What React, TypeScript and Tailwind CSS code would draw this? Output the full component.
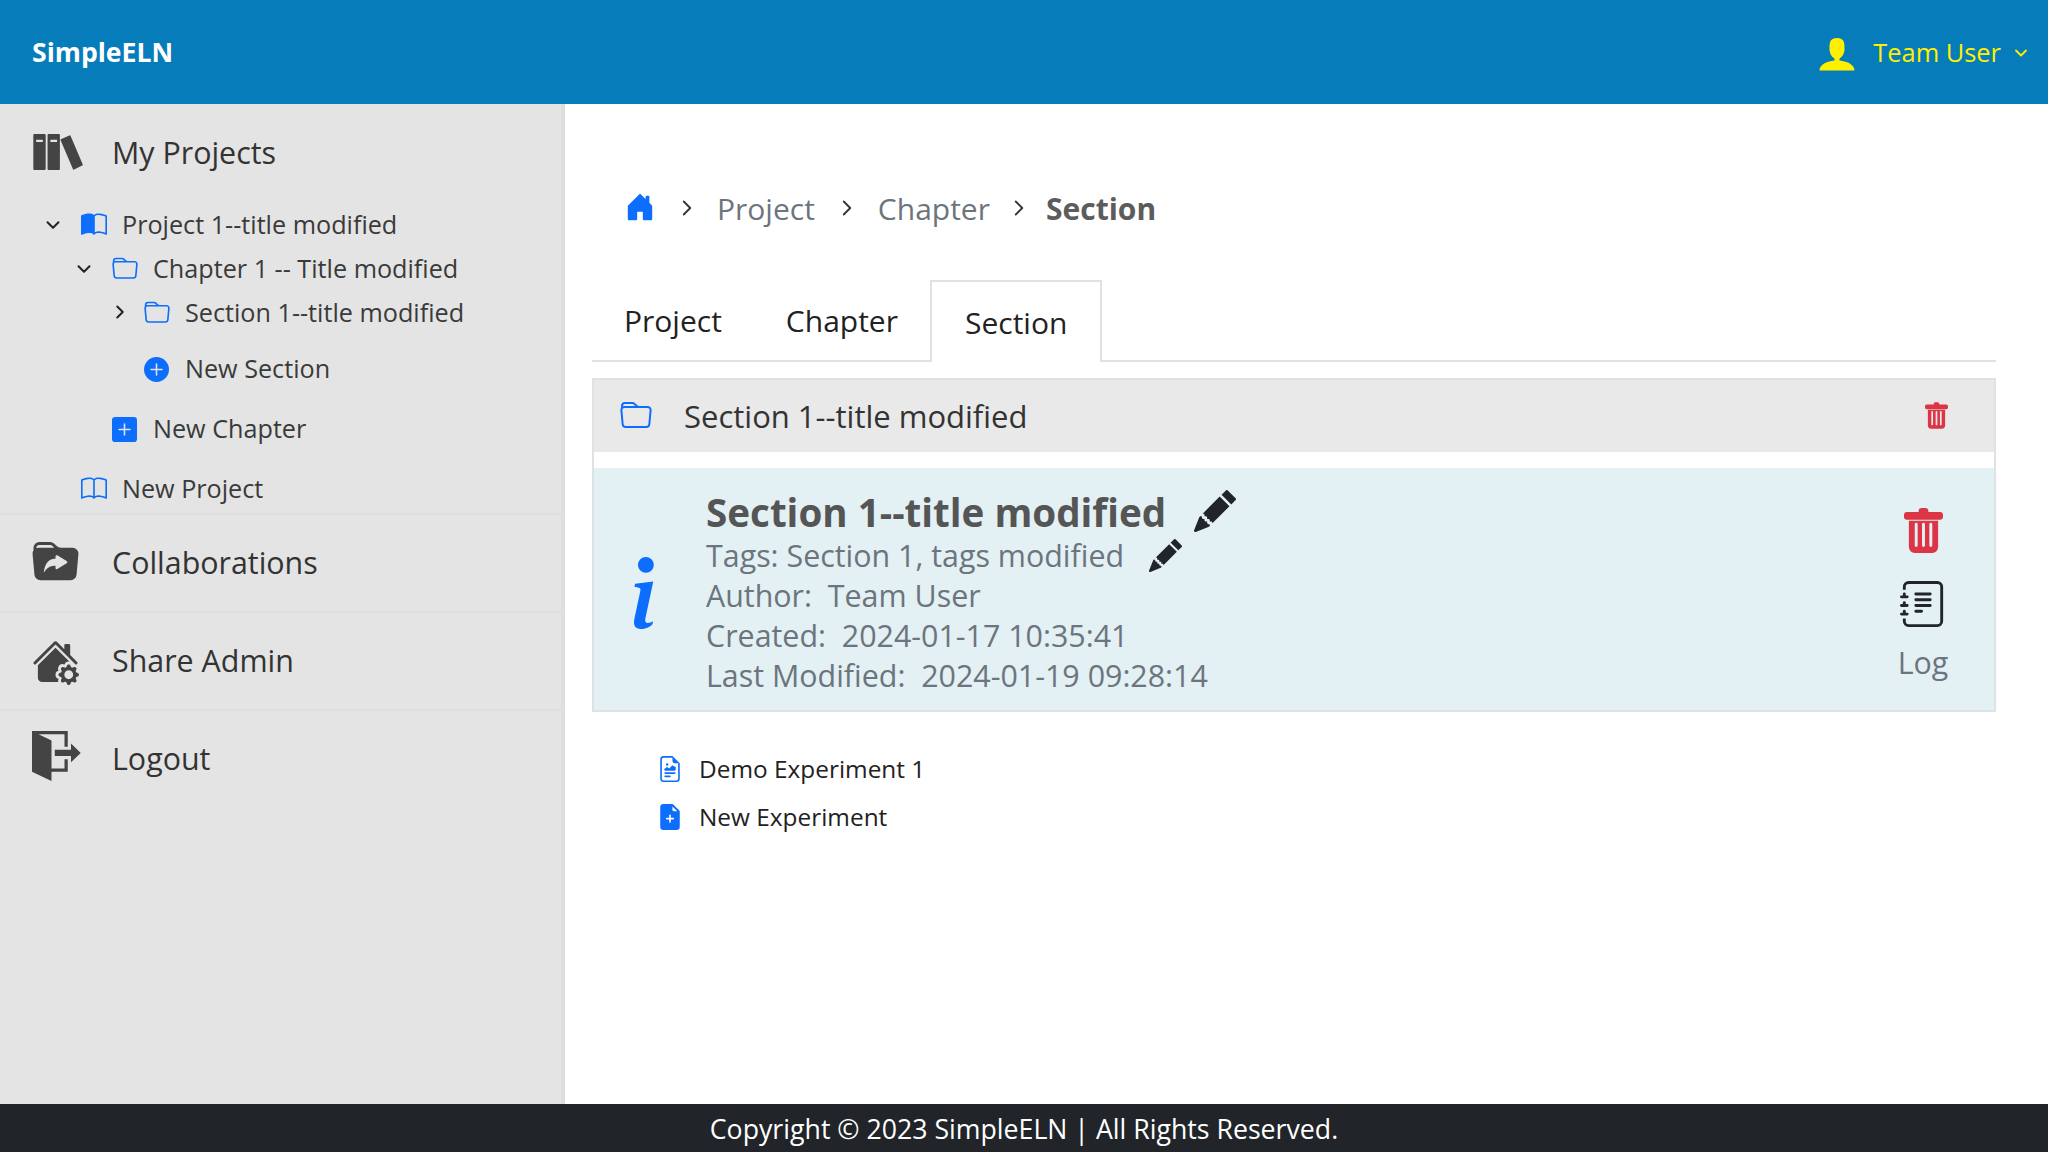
import type { ReactNode } from 'react';
import { ChevronDown, ChevronRight } from 'lucide-react';
import {
  BsBook,
  BsBookHalf,
  BsFileEarmarkPlusFill,
  BsFileEarmarkRichtext,
  BsFolder,
  BsFolderSymlinkFill,
  BsHouseDoorFill,
  BsHouseGearFill,
  BsInfoLg,
  BsJournalText,
  BsPencilFill,
  BsPlusCircleFill,
  BsPlusSquareFill,
} from 'react-icons/bs';
import { ImExit, ImUser } from 'react-icons/im';

function TrashIcon({ className }: { className: string }) {
  return (
    <svg viewBox="0 0 40 46" className={className} fill="currentColor">
      <path d="M15 3a3 3 0 0 1 3-3h4a3 3 0 0 1 3 3v1h12a3 3 0 0 1 3 3v2a3 3 0 0 1-3 3H3a3 3 0 0 1-3-3V7a3 3 0 0 1 3-3h12z" />
      <path
        fillRule="evenodd"
        d="M5 13h30v27a6 6 0 0 1-6 6H11a6 6 0 0 1-6-6zm6 3.500v22a1.500 1.500 0 0 0 3 0v-22a1.500 1.500 0 0 0-3 0zm7.500 0v22a1.500 1.500 0 0 0 3 0v-22a1.500 1.500 0 0 0-3 0zm7.500 0v22a1.500 1.500 0 0 0 3 0v-22a1.500 1.500 0 0 0-3 0z"
      />
    </svg>
  );
}

function LibraryIcon({ className }: { className: string }) {
  return (
    <svg viewBox="0 0 52 39" className={className} fill="currentColor">
      <path
        fillRule="evenodd"
        d="M1 0h11a1 1 0 0 1 1 1v36a1 1 0 0 1-1 1H1a1 1 0 0 1-1-1V1a1 1 0 0 1 1-1zm2 6v2.500h7V6zM16 0h11a1 1 0 0 1 1 1v36a1 1 0 0 1-1 1H16a1 1 0 0 1-1-1V1a1 1 0 0 1 1-1zm2 6v2.500h7V6z"
      />
      <path d="M29 5.500 38 1.500a1 1 0 0 1 1.300.5L52 32a1 1 0 0 1-.5 1.300L43 37.500a1 1 0 0 1-1.300-.5L29 7a1 1 0 0 1 0-1.500z" />
    </svg>
  );
}

function TreeRow({ pl, h, chevron, icon, label }: { pl: string; h: string; chevron?: ReactNode; icon: ReactNode; label: string }) {
  return (
    <div className={`flex items-center ${pl} ${h}`}>
      <span className="w-[39px] shrink-0 flex items-center">{chevron}</span>
      <span className="w-[41px] shrink-0 flex items-center">{icon}</span>
      <span className="text-[25.2px] leading-none text-[#3a3a3a] whitespace-nowrap">{label}</span>
    </div>
  );
}

function NavRow({ icon, label }: { icon: ReactNode; label: string }) {
  return (
    <div className="h-[98px] flex items-center pl-[32px] border-t-2 border-[#dedede]">
      <span className="w-[80px] shrink-0 flex items-center text-[#444444]">{icon}</span>
      <span className="text-[30.4px] leading-none text-[#333333]">{label}</span>
    </div>
  );
}

export default function App() {
  return (
    <div className="h-screen flex flex-col bg-white font-['Open_Sans','Noto_Sans',sans-serif]">
      {/* Header */}
      <header className="h-[104px] shrink-0 bg-[#067cba] flex items-center justify-between pl-[32px] pr-[17px] pt-[1px]">
        <span className="text-[26.6px] font-bold text-white">SimpleELN</span>
        <div className="flex items-center text-[#fff000]">
          <ImUser className="w-[40px] h-[40px]" />
          <span className="ml-[16px] text-[25.4px]">Team User</span>
          <ChevronDown className="ml-[10px] w-[20px] h-[20px]" strokeWidth={2.2} />
        </div>
      </header>

      <div className="flex-1 flex min-h-0">
        {/* Sidebar */}
        <aside className="w-[565px] shrink-0 bg-[#e4e4e4] border-r-[4px] border-[#dedede]">
          <div className="h-[98px] flex items-center pl-[32px]">
            <span className="w-[80px] shrink-0 flex items-center text-[#444444]">
              <LibraryIcon className="w-[52px] h-[37px] -mt-[2px]" />
            </span>
            <span className="text-[30.4px] leading-none text-[#333333]">My Projects</span>
          </div>
          <div className="h-[310px]">
            <TreeRow
              pl="pl-[42px]"
              h="h-[44px] mt-[1px]"
              chevron={<ChevronDown className="w-[22px] h-[22px] text-[#222222]" strokeWidth={2.2} />}
              icon={<BsBookHalf className="w-[26px] h-[26px] text-[#0d6efd]" />}
              label="Project 1--title modified"
            />
            <TreeRow
              pl="pl-[73px]"
              h="h-[44px]"
              chevron={<ChevronDown className="w-[22px] h-[22px] text-[#222222]" strokeWidth={2.2} />}
              icon={<BsFolder className="w-[26px] h-[26px] text-[#0d6efd]" />}
              label="Chapter 1 -- Title modified"
            />
            <TreeRow
              pl="pl-[105px]"
              h="h-[44px]"
              chevron={<ChevronRight className="w-[22px] h-[22px] text-[#222222] ml-[4px] -mt-[2px]" strokeWidth={2.2} />}
              icon={<BsFolder className="w-[26px] h-[26px] text-[#0d6efd]" />}
              label="Section 1--title modified"
            />
            <TreeRow
              pl="pl-[105px]"
              h="h-[44px] mt-[12px]"
              icon={<BsPlusCircleFill className="w-[25px] h-[25px] text-[#0d6efd]" />}
              label="New Section"
            />
            <TreeRow
              pl="pl-[73px]"
              h="h-[44px] mt-[16px]"
              icon={<BsPlusSquareFill className="w-[25px] h-[25px] text-[#0d6efd]" />}
              label="New Chapter"
            />
            <TreeRow
              pl="pl-[42px]"
              h="h-[44px] mt-[16px]"
              icon={<BsBook className="w-[26px] h-[26px] text-[#0d6efd]" />}
              label="New Project"
            />
          </div>
          <NavRow icon={<BsFolderSymlinkFill className="w-[47px] h-[47px] -mt-[2px]" />} label="Collaborations" />
          <NavRow icon={<BsHouseGearFill className="w-[47px] h-[47px]" />} label="Share Admin" />
          <NavRow icon={<ImExit className="w-[52px] h-[50px] -mt-[6px]" preserveAspectRatio="none" />} label="Logout" />
        </aside>

        {/* Main */}
        <main className="flex-1 pl-[27px] pr-[52px]">
          <nav className="h-[90px] mt-[59px] flex items-center pl-[33px] text-[30px] text-[#6c757d]">
            <BsHouseDoorFill className="w-[30px] h-[30px] text-[#0d6efd] -mt-[2px]" />
            <ChevronRight className="w-[26px] h-[26px] text-[#333333] ml-[19px] mr-[17px]" strokeWidth={1.7} />
            <span>Project</span>
            <ChevronRight className="w-[26px] h-[26px] text-[#333333] ml-[19px] mr-[18px]" strokeWidth={1.7} />
            <span>Chapter</span>
            <ChevronRight className="w-[26px] h-[26px] text-[#333333] ml-[16px] mr-[14px]" strokeWidth={1.7} />
            <span className="font-bold text-[#5c5c5c]">Section</span>
          </nav>

          {/* Tabs */}
          <div className="h-[82px] mt-[27px] flex items-end border-b-2 border-[#dee2e6] text-[30px] text-[#222222]">
            <div className="h-[80px] px-[32px] flex items-center">Project</div>
            <div className="h-[80px] px-[32px] flex items-center">Chapter</div>
            <div className="h-[82px] -mb-[2px] px-[33px] flex items-center bg-white border-2 border-b-0 border-[#dee2e6]">Section</div>
          </div>

          {/* Section card */}
          <div className="mt-[16px] border-2 border-[#dee2e6]">
            <div className="h-[72px] bg-[#e9e9e9] flex items-center pl-[26px] pr-[46px]">
              <BsFolder className="w-[32px] h-[32px] text-[#0d6efd] mr-[32px]" />
              <span className="flex-1 text-[31px] text-[#333333]">Section 1--title modified</span>
              <TrashIcon className="w-[23px] h-[27px] text-[#dc3545] -mt-[2px]" />
            </div>
            <div className="h-[16px]" />
            <div className="h-[242px] bg-[#e3f0f4] flex items-center pl-[1px] pr-[41px]">
              <BsInfoLg className="w-[96px] h-[96px] text-[#0d6efd] shrink-0 mt-[8px]" />
              <div className="ml-[15px] mt-[5px] flex-1 text-[30.4px] leading-[40px] text-[#6c757d]">
                <div className="flex items-center h-[48px]">
                  <span className="text-[38.6px] font-bold text-[#555555]">Section 1--title modified</span>
                  <BsPencilFill className="w-[42px] h-[42px] text-[#212529] ml-[28px] -mt-[2px]" />
                </div>
                <div className="flex items-center">
                  <span>Tags: Section 1, tags modified</span>
                  <BsPencilFill className="w-[33px] h-[33px] text-[#212529] ml-[25px]" />
                </div>
                <div className="whitespace-pre">Author:  Team User</div>
                <div className="whitespace-pre">Created:  2024-01-17 10:35:41</div>
                <div className="whitespace-pre">Last Modified:  2024-01-19 09:28:14</div>
              </div>
              <div className="w-[60px] flex flex-col items-center shrink-0 mt-[8px]">
                <TrashIcon className="w-[39px] h-[45px] text-[#dc3545]" />
                <BsJournalText className="w-[46px] h-[48px] text-[#212529] mt-[27px]" />
                <span className="mt-[20px] text-[30.4px] leading-none text-[#6c757d]">Log</span>
              </div>
            </div>
          </div>

          {/* Experiments */}
          <div className="mt-[33px] pl-[68px] text-[24.4px] text-[#222222]">
            <div className="h-[48px] flex items-center">
              <BsFileEarmarkRichtext className="w-[26px] h-[26px] text-[#0d6efd] mr-[16px] -ml-[3px]" />
              Demo Experiment 1
            </div>
            <div className="h-[48px] flex items-center">
              <BsFileEarmarkPlusFill className="w-[26px] h-[26px] text-[#0d6efd] mr-[16px] -ml-[3px]" />
              New Experiment
            </div>
          </div>
        </main>
      </div>

      {/* Footer */}
      <footer className="h-[48px] shrink-0 bg-[#212529] flex items-center justify-center text-[26.7px] text-white pt-[2px]">
        Copyright © 2023 SimpleELN | All Rights Reserved.
      </footer>
    </div>
  );
}
